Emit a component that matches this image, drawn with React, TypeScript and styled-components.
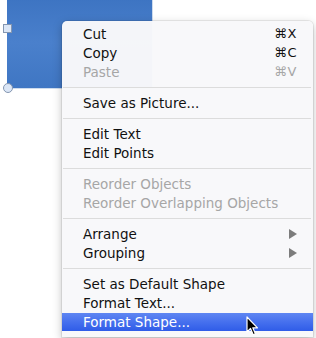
import styled, { createGlobalStyle } from "styled-components";

const GlobalStyle = createGlobalStyle`
  html, body {
    margin: 0;
    padding: 0;
    background: #ffffff;
  }
  body {
    font-family: "DejaVu Sans", "Liberation Sans", sans-serif;
    -webkit-font-smoothing: antialiased;
  }
`;

type Item =
  | { kind: "sep" }
  | { kind: "item"; label: string; shortcut?: string; disabled?: boolean; submenu?: boolean; active?: boolean };

const items: Item[] = [
  { kind: "item", label: "Cut", shortcut: "⌘X" },
  { kind: "item", label: "Copy", shortcut: "⌘C" },
  { kind: "item", label: "Paste", shortcut: "⌘V", disabled: true },
  { kind: "sep" },
  { kind: "item", label: "Save as Picture..." },
  { kind: "sep" },
  { kind: "item", label: "Edit Text" },
  { kind: "item", label: "Edit Points" },
  { kind: "sep" },
  { kind: "item", label: "Reorder Objects", disabled: true },
  { kind: "item", label: "Reorder Overlapping Objects", disabled: true },
  { kind: "sep" },
  { kind: "item", label: "Arrange", submenu: true },
  { kind: "item", label: "Grouping", submenu: true },
  { kind: "sep" },
  { kind: "item", label: "Set as Default Shape" },
  { kind: "item", label: "Format Text..." },
  { kind: "item", label: "Format Shape...", active: true },
];

export default function App() {
  return (
    <>
      <GlobalStyle />
      <Canvas>
        <Shape>
          <SquareHandle />
          <RoundHandle />
        </Shape>
        <Menu>
          {items.map((it, i) =>
            it.kind === "sep" ? (
              <Separator key={i} />
            ) : (
              <Row key={i} $disabled={it.disabled} $active={it.active}>
                <Label>{it.label}</Label>
                {it.shortcut && <Shortcut>{it.shortcut}</Shortcut>}
                {it.submenu && <Arrow />}
              </Row>
            )
          )}
        </Menu>
        <Cursor width="14" height="21" viewBox="0 0 14 21">
          <path
            d="M1 1 L1 16 L4.5 12.5 L7.2 18.8 L9.4 17.8 L6.8 11.8 L11.5 11.8 Z"
            fill="#000"
            stroke="#fff"
            strokeWidth="1.2"
            strokeLinejoin="round"
          />
        </Cursor>
      </Canvas>
    </>
  );
}

const Canvas = styled.div`
  position: relative;
  width: 316px;
  height: 338px;
  overflow: hidden;
  background: #ffffff;
`;

const Shape = styled.div`
  position: absolute;
  left: 7px;
  top: -2px;
  width: 145px;
  height: 90px;
  background: linear-gradient(180deg, #3d74c2 0%, #4a80cc 50%, #3f76c3 100%);
  box-shadow: 1px 1px 0 rgba(200, 215, 235, 0.9);
`;

const SquareHandle = styled.div`
  position: absolute;
  left: -4px;
  top: 26px;
  width: 7px;
  height: 7px;
  background: #dbe6f6;
  border: 1px solid #8496b0;
`;

const RoundHandle = styled.div`
  position: absolute;
  left: -4px;
  bottom: -5px;
  width: 8px;
  height: 8px;
  border-radius: 50%;
  background: #dbe6f6;
  border: 1px solid #8496b0;
`;

const Menu = styled.div`
  position: absolute;
  left: 62px;
  top: 21px;
  width: 251px;
  padding: 3px 0 6px;
  background: rgba(248, 248, 250, 0.98);
  border-radius: 5px 5px 0 0;
  box-shadow: 0 0 0 1px rgba(0, 0, 0, 0.07), 0 3px 10px rgba(0, 0, 0, 0.25);
  display: flex;
  flex-direction: column;
`;

const Row = styled.div<{ $disabled?: boolean; $active?: boolean }>`
  height: 19px;
  display: flex;
  align-items: center;
  padding: 0 16px 0 21px;
  font-size: 13.5px;
  color: ${(p) => (p.$active ? "#ffffff" : p.$disabled ? "#a6a6a6" : "#111111")};
  background: ${(p) =>
    p.$active ? "linear-gradient(180deg, #5f86f2 0%, #4670ee 50%, #2f5ce8 100%)" : "transparent"};
  ${(p) => (p.$active ? "margin-top: 1px; height: 18px;" : "")}
`;

const Label = styled.span`
  flex: 1;
  white-space: nowrap;
`;

const Shortcut = styled.span`
  font-size: 13px;
  letter-spacing: 0.5px;
`;

const Arrow = styled.span`
  width: 0;
  height: 0;
  border-top: 5px solid transparent;
  border-bottom: 5px solid transparent;
  border-left: 8px solid #7c7c7c;
`;

const Separator = styled.div`
  height: 1px;
  margin: 6px 2px 5px 1px;
  background: #dcdcdc;
`;

const Cursor = styled.svg`
  position: absolute;
  left: 246px;
  top: 316px;
`;
